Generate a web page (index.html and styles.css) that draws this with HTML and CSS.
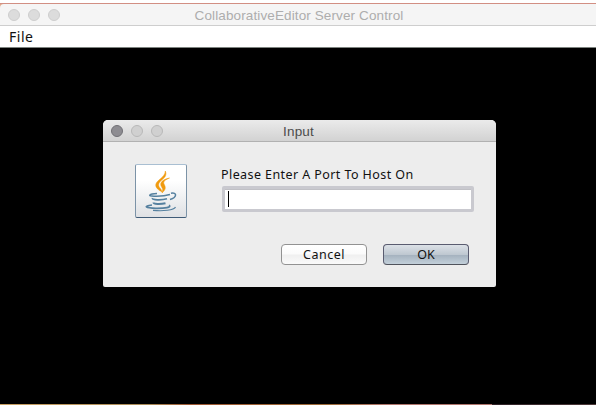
FILE: index.html
```html
<!DOCTYPE html>
<html lang="en">
<head>
<meta charset="utf-8">
<title>CollaborativeEditor Server Control</title>
<link rel="stylesheet" href="styles.css">
</head>
<body>
<div class="desktop">
  <main class="window">
    <header class="titlebar">
      <div class="lights"><i></i><i></i><i></i></div>
      <h1 class="window-title">CollaborativeEditor Server Control</h1>
    </header>
    <nav class="menubar"><span class="menu">File</span></nav>
    <div class="content">
      <section class="dialog">
        <header class="dialog-title">
          <div class="lights dialog-lights"><i class="close"></i><i></i><i></i></div>
          <h2 class="dialog-name">Input</h2>
        </header>
        <div class="dialog-body">
          <div class="java">
            <svg width="50" height="52" viewBox="0 0 50 52">
              <g fill="#f09a0e" stroke="#f09a0e" stroke-width=".5">
                <path d="M29.300 6c2 4.500-1 7-4 9.500-3.500 3-3.500 5.500-.5 8.500l1.500 3c-4-2-7-4.500-6.500-7.500.6-4.500 9.500-7 9.500-13.500z"/>
                <path d="M33.500 13c-4.500 2-6.500 3.500-5.500 6 1.500 3 2.500 5-2 9 1-3 1-4-.5-6.200-2.600-4.400 1.500-7.500 8-8.800z"/>
              </g>
              <g fill="none" stroke="#55809f">
                <path d="M21 28.500c-8 .5-10 2.500-3 2.700 6 .2 12-.4 16-1.700" stroke-width="1.500"/>
                <path d="M35 28.300c6-1.500 6.500 4-1 6.200" stroke-width="1.500"/>
                <path d="M16.500 33c-1 2.200 9 2.400 14.500.8" stroke-width="1.700"/>
                <path d="M17.500 37.500c0 1.900 7 2 12 .8" stroke-width="2"/>
                <path d="M16 40c-9 1-7 3.200 4 3.300 9 .1 16-1 13-3" stroke-width="1.700"/>
                <path d="M17 45.300c10 1.200 21-.2 22.500-3.300" stroke-width="1.200"/>
              </g>
            </svg>
          </div>
          <div class="form">
            <label class="prompt" for="port">Please Enter A Port To Host On</label>
            <div class="field" id="port"><span class="caret"></span></div>
            <div class="actions">
              <button class="button">Cancel</button>
              <button class="button primary">OK</button>
            </div>
          </div>
        </div>
      </section>
    </div>
  </main>
  <div class="desktop-edge"></div>
</div>
</body>
</html>
```
FILE: styles.css
```css
* { box-sizing: border-box; }
body { margin: 0; font-family: "Noto Sans", "Open Sans", sans-serif; font-size: 12.5px; color: #111; }
.desktop { width: 596px; height: 405px; padding-top: 3px; overflow: hidden; background: #fff; }
.window { height: 401px; background: linear-gradient(#e0a98a 8px, #000 8px); border-top: 1px solid #d28f83; }
.titlebar { display: grid; grid-template-columns: 190px 1fr 188px; align-items: center; height: 22px; background: #f5f5f5; border-bottom: 1px solid #cecece; border-top-left-radius: 4px; }
.lights { display: flex; gap: 8px; padding-left: 8px; }
.lights i { width: 12px; height: 12px; border: 1px solid #cecece; border-radius: 50%; background: #dcdcdc; }
.window-title { margin: 0; font: 13.5px/20px "Liberation Sans", sans-serif; letter-spacing: .12px; text-align: center; white-space: nowrap; color: #adadad; padding-top: 2px; }
.menubar { display: flex; align-items: center; height: 22px; padding-left: 9px; background: #fff; border-bottom: 1px solid #7d837f; }
.menu { font-size: 14px; line-height: 20px; letter-spacing: .5px; }
.content { display: flex; padding: 72px 0 0 103px; }
.dialog { width: 393px; height: 167px; border-radius: 5px 5px 2px 2px; overflow: hidden; background: #ededed; }
.dialog-title { display: grid; grid-template-columns: 150px 1fr 152px; align-items: center; height: 22px; background: linear-gradient(#ebebeb, #d2d2d2); border-bottom: 1px solid #b1b1b1; }
.dialog-lights i { background: #d0d0d0; border-color: #b8b8b8; }
.dialog-lights .close { background: #8e8d92; border-color: #717075; }
.dialog-name { margin: 0; padding-top: 2px; font: 13.5px/20px "Liberation Sans", sans-serif; letter-spacing: .2px; text-align: center; color: #4b4b4b; }
.dialog-body { display: flex; gap: 31px; padding: 22px 22px 0 32px; }
.java { width: 52px; height: 54px; border: 1px solid; border-color: #a9bfd2 #7c93a7 #3f5b77 #7c93a7; border-radius: 2px; background: linear-gradient(#fff 30%, #dfe1e4); }
.java svg { display: block; }
.form { width: 256px; }
.prompt { display: block; height: 22px; padding: 1px 0 0 3px; line-height: 20px; letter-spacing: .42px; white-space: nowrap; }
.field { width: 252px; height: 26px; margin-left: 4px; padding: 2px; border: 3px solid #c9c9cf; border-radius: 2px; background: #fff; box-shadow: inset 0 1px #c0c0c5; }
.caret { display: block; width: 1px; height: 16px; margin-left: 1px; background: #000; }
.actions { display: flex; gap: 16px; margin: 32px 0 0 63px; }
.button { width: 86px; height: 21px; padding: 0; border: 1px solid #929292; border-radius: 4px; background: linear-gradient(#fff 0, #fbfbfb 48%, #efefef 52%, #fafafa); font: inherit; line-height: 18px; letter-spacing: .5px; color: #111; }
.primary { border-color: #5a5c70; border-bottom-color: #50535c; background: linear-gradient(#dce1e7 0, #bfc8d1 50%, #a5b2bf 54%, #c3d0da 100%); letter-spacing: 0; }
.desktop-edge { height: 1px; background: linear-gradient(90deg, #c9a063 0, #a88a58 25%, #9d5733 32%, #9b6a38 55%, #ae746b 65%, #ae746b 82.500%, #2d2025 82.500%, #4d3939); }
```
